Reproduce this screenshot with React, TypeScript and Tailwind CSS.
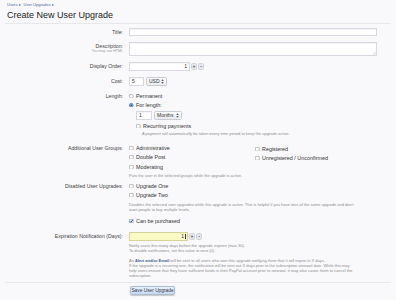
import type { ReactNode } from 'react';

function Checkbox({ checked = false }: { checked?: boolean }) {
  return (
    <svg viewBox="0 0 10 10" className="h-[4.5px] w-[4.5px] shrink-0">
      <rect x="0.75" y="0.75" width="8.5" height="8.5" rx="1" fill={checked ? '#dde8f6' : '#ffffff'} stroke={checked ? '#7d9fcc' : '#9a9a9a'} strokeWidth="1.5" />
      {checked && <path d="M2.2 5.2 L4.3 7.6 L8.6 1.6" fill="none" stroke="#2b5592" strokeWidth="2" />}
    </svg>
  );
}

function Radio({ checked = false }: { checked?: boolean }) {
  return (
    <svg viewBox="0 0 10 10" className="h-[4.5px] w-[4.5px] shrink-0">
      <circle cx="5" cy="5" r="4.25" fill={checked ? '#7fa8e0' : '#ffffff'} stroke={checked ? '#4d7fc4' : '#9a9a9a'} strokeWidth="1.5" />
      {checked && <circle cx="5" cy="5" r="1.6" fill="#1d3f73" />}
    </svg>
  );
}

function Check({ children, checked }: { children: ReactNode; checked?: boolean }) {
  return (
    <label className="flex h-[9px] items-center gap-[2.5px] text-[5.4px] text-[#333]">
      <Checkbox checked={checked} />
      <span>{children}</span>
    </label>
  );
}

function Hint({ children, className = '' }: { children: ReactNode; className?: string }) {
  return <p className={`text-[4px] leading-[5px] text-[#8c8c8c] ${className}`}>{children}</p>;
}

function Spinner() {
  return (
    <div className="ml-[1px] flex gap-[1px]">
      {['+', '-'].map((s) => (
        <span
          key={s}
          className="flex h-[7px] w-[6px] items-center justify-center rounded-[1.5px] border-[0.5px] border-[#cfd3db] bg-[#e6e8ee] text-[5px] font-bold leading-none text-[#555]"
        >
          {s}
        </span>
      ))}
    </div>
  );
}

function Select({ label, width }: { label: string; width: string }) {
  return (
    <div
      className={`flex h-[9px] ${width} items-center justify-between rounded-[1.5px] border-[0.5px] border-[#c8ccd4] bg-gradient-to-b from-[#fbfbfc] to-[#e9ebef] px-[2px] text-[5px] text-[#333]`}
    >
      <span>{label}</span>
      <svg viewBox="0 0 6 10" className="h-[5px] w-[3px]">
        <path d="M3 0.5 L5.5 4 L0.5 4 Z M3 9.5 L5.5 6 L0.5 6 Z" fill="#555" />
      </svg>
    </div>
  );
}

function Row({ label, children, className = '', labelClass = '' }: { label: ReactNode; children: ReactNode; className?: string; labelClass?: string }) {
  return (
    <div className={`flex ${className}`}>
      <div className={`w-[118px] shrink-0 text-right text-[5.2px] text-[#444] ${labelClass}`}>{label}</div>
      <div className="ml-[6px] w-[248px]">{children}</div>
    </div>
  );
}

const input = 'border-[0.5px] border-[#d6d9df] bg-white shadow-[inset_0_0.5px_1px_rgba(0,0,0,0.08)]';

export default function App() {
  return (
    <div className="min-h-[300px] bg-[#f9f9fb] px-[5px] font-['Liberation_Sans',Arial,sans-serif]">
      <div className="flex h-[8px] items-end gap-[3px] pl-[2px] text-[4px] leading-[6px] text-[#4a6fa5]">
        <span>Users ▸</span>
        <span>User Upgrades ▸</span>
      </div>
      <h1 className="mt-[2px] pl-[2px] text-[9px] leading-[10px] text-[#222]">Create New User Upgrade</h1>
      <div className="mt-[3px] h-px bg-[#e6e8ec]" />

      <Row label="Title:" className="mt-[4px]" labelClass="leading-[8px]">
        <div className={`h-[8px] ${input}`} />
      </Row>

      <Row
        label={
          <>
            <div className="pt-[0.5px] leading-[6px]">Description:</div>
            <div className="text-[3.6px] leading-[4px] text-[#999]">You may use HTML</div>
          </>
        }
        className="mt-[6px]"
      >
        <div className={`relative h-[14px] ${input}`}>
          <svg viewBox="0 0 4 4" className="absolute bottom-[0.5px] right-[0.5px] h-[2.5px] w-[2.5px]">
            <path d="M4 0 L0 4 M4 2 L2 4" stroke="#999" strokeWidth="0.6" />
          </svg>
        </div>
      </Row>

      <Row label="Display Order:" className="mt-[6px]" labelClass="leading-[9px]">
        <div className="flex items-center">
          <div className={`flex h-[9px] w-[61px] items-center justify-end pr-[2px] text-[5px] text-[#333] ${input}`}>1</div>
          <Spinner />
        </div>
      </Row>

      <Row label="Cost:" className="mt-[6px]" labelClass="leading-[9px]">
        <div className="flex items-center gap-[2px]">
          <div className={`flex h-[9px] w-[15px] items-center pl-[2px] text-[5px] text-[#333] ${input}`}>5</div>
          <Select label="USD" width="w-[21px]" />
        </div>
      </Row>

      <Row label="Length:" className="mt-[5.5px]" labelClass="leading-[9px]">
        <label className="flex h-[9px] items-center gap-[2.5px] text-[5.4px] text-[#333]">
          <Radio />
          <span>Permanent</span>
        </label>
        <label className="flex h-[9px] items-center gap-[2.5px] text-[5.4px] text-[#333]">
          <Radio checked />
          <span>For length:</span>
        </label>
        <div className="mt-[1.5px] flex items-center gap-[2px] pl-[7px]">
          <div className={`flex h-[9px] w-[16px] items-center pl-[2px] text-[5px] text-[#333] ${input}`}>1</div>
          <Select label="Months" width="w-[28px]" />
        </div>
        <div className="mt-[1.5px] pl-[7px]">
          <Check>Recurring payments</Check>
          <Hint className="pl-[6px]">
            A payment will automatically be taken every time period to keep the upgrade active.
          </Hint>
        </div>
      </Row>

      <Row label="Additional User Groups:" className="mt-[8px]" labelClass="leading-[9px]">
        <div className="grid grid-cols-[126px_1fr]">
          <div>
            <Check>Administrative</Check>
            <Check>Double Post</Check>
            <div className="mt-[1px]">
              <Check>Moderating</Check>
            </div>
          </div>
          <div className="pt-[1px]">
            <Check>Registered</Check>
            <Check>Unregistered / Unconfirmed</Check>
          </div>
        </div>
        <Hint className="mt-[1px]">Puts the user in the selected groups while the upgrade is active.</Hint>
      </Row>

      <Row label="Disabled User Upgrades:" className="mt-[4px]" labelClass="leading-[9px]">
        <Check>Upgrade One</Check>
        <Check>Upgrade Two</Check>
        <Hint className="mt-[2px]">
          Disables the selected user upgrades while this upgrade is active. This is helpful if you have tiers of the same upgrade and don't
          <br />
          want people to buy multiple levels.
        </Hint>
        <div className="mt-[5px]">
          <Check checked>Can be purchased</Check>
        </div>
      </Row>

      <Row label="Expiration Notification (Days):" className="mt-[6.5px]" labelClass="leading-[9px]">
        <div className="flex items-center">
          <div className="flex h-[9px] w-[59px] items-center justify-end border-[0.5px] border-[#d3d39a] bg-[#fafac4] pr-[2px] text-[5px] text-[#333]">
            1<span className="ml-[0.5px] h-[5px] w-[0.5px] bg-[#333]" />
          </div>
          <Spinner />
        </div>
        <Hint className="mt-[1.5px]">
          Notify users this many days before the upgrade expires (max 30).
          <br />
          To disable notifications, set this value to zero (0).
        </Hint>
        <Hint className="mt-[5.5px]">
          An <b className="font-bold text-[#3f5f8f]">Alert and/or Email</b> will be sent to all users who own this upgrade notifying them that it will expire in X days.
          <br />
          If the upgrade is a recurring one, the notification will be sent out X days prior to the subscription renewal date. While this may
          <br />
          help users ensure that they have sufficient funds in their PayPal account prior to renewal, it may also cause them to cancel the
          <br />
          subscription.
        </Hint>
      </Row>

      <div className="mt-[4px] h-px bg-[#e6e8ec]" />
      <div className="mt-[3px] pl-[125px]">
        <button className="flex h-[9px] w-[45px] items-center justify-center rounded-[2px] border-[0.5px] border-[#a9bdd6] bg-gradient-to-b from-[#e8f0fa] to-[#c9d9ee] text-[4.8px] text-[#2d3b4f] shadow-[0_0.5px_1px_rgba(0,0,0,0.2)]">
          Save User Upgrade
        </button>
      </div>
    </div>
  );
}
